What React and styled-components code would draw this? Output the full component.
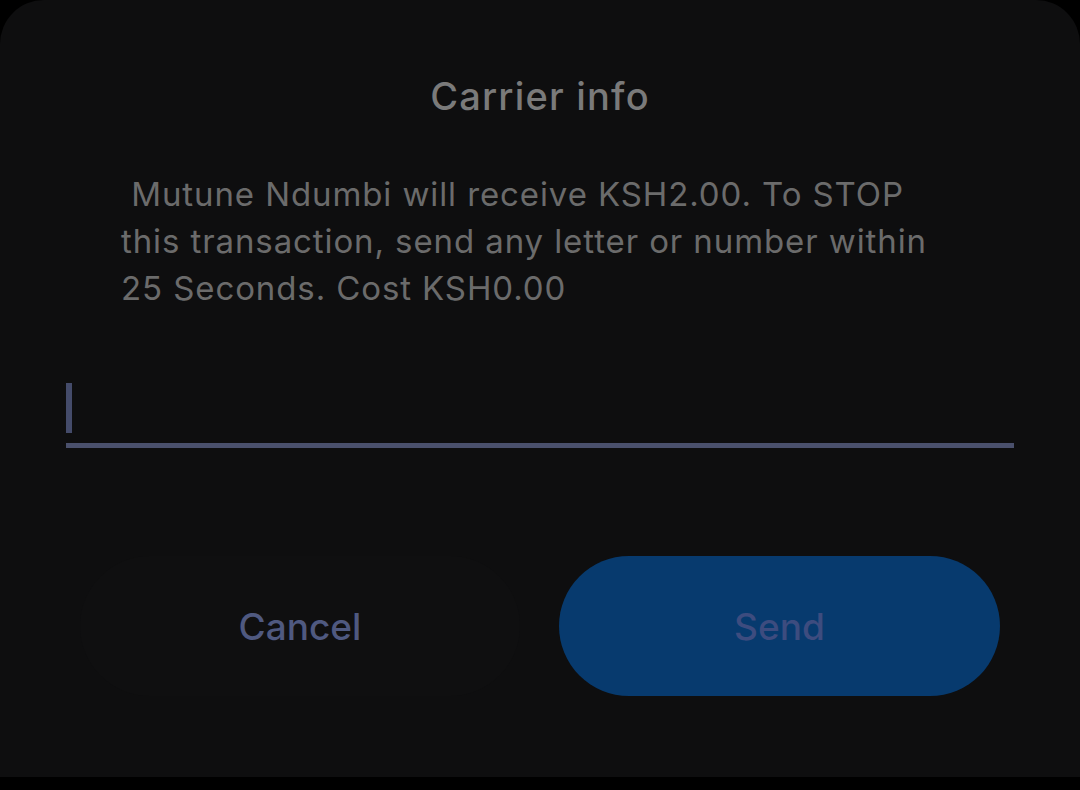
import { createGlobalStyle, styled } from "styled-components"

const Global = createGlobalStyle`
  html, body {
    margin: 0;
    padding: 0;
    background: #000;
  }
  body {
    font-family: Inter, "Open Sans", "Liberation Sans", sans-serif;
  }
`

export default function App() {
    return (
        <Page>
            <Global />
            <Dialog>
                <Title>Carrier info</Title>
                <Message>
                    &nbsp;Mutune Ndumbi will receive KSH2.00. To STOP this transaction, send any letter or number within 25 Seconds. Cost KSH0.00
                </Message>
                <Field>
                    <Caret />
                </Field>
                <Actions>
                    <Button>Cancel</Button>
                    <Button primary>Send</Button>
                </Actions>
            </Dialog>
        </Page>
    )
}

const Page = styled.div`
  width: 1080px;
  height: 790px;
  background: #000;
  overflow: hidden;
`

const Dialog = styled.div`
  width: 1080px;
  height: 777px;
  box-sizing: border-box;
  background: #0e0e0f;
  border-radius: 44px 44px 0 0;
  display: flex;
  flex-direction: column;
  padding: 72px 66px 0 66px;
`

const Title = styled.h1`
  margin: 0;
  text-align: center;
  font-size: 38px;
  font-weight: 500;
  line-height: 48px;
  letter-spacing: 1.2px;
  color: #7a7a7a;
`

const Message = styled.p`
  margin: 51px 0 0 0;
  width: 832px;
  padding-left: 55px;
  font-size: 33px;
  line-height: 47px;
  letter-spacing: 0.9px;
  color: #6b6b6b;
`

const Field = styled.div`
  margin-top: 71px;
  height: 60px;
  border-bottom: 5px solid #4a506c;
  display: flex;
  align-items: flex-start;
`

const Caret = styled.div`
  width: 6px;
  height: 50px;
  background: #444b6a;
`

const Actions = styled.div`
  margin-top: 108px;
  display: grid;
  grid-template-columns: 440px 441px;
  justify-content: space-between;
  padding: 0 14px 0 14px;
`

const Button = styled.div`
  height: 140px;
  border-radius: 70px;
  display: flex;
  align-items: center;
  justify-content: center;
  font-size: 37px;
  font-weight: 500;
  color: ${p => p.primary ? "#3d4c7f" : "#4f5980"};
  background: ${p => p.primary ? "#073a6e" : "#0f0f10"};
`
